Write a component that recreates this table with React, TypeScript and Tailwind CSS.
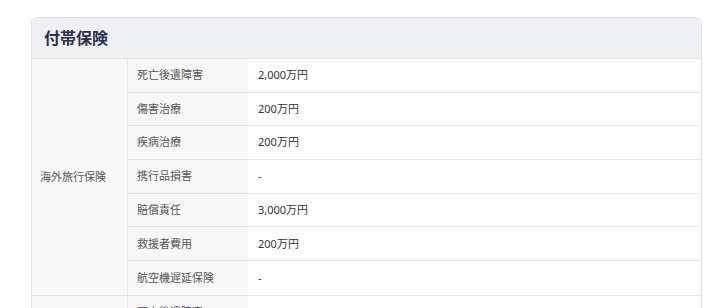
import React from "react";

interface Coverage {
  label: string;
  value: string;
}

interface Section {
  category: string;
  items: Coverage[];
}

const sections: Section[] = [
  {
    category: "海外旅行保険",
    items: [
      { label: "死亡後遺障害", value: "2,000万円" },
      { label: "傷害治療", value: "200万円" },
      { label: "疾病治療", value: "200万円" },
      { label: "携行品損害", value: "-" },
      { label: "賠償責任", value: "3,000万円" },
      { label: "救援者費用", value: "200万円" },
      { label: "航空機遅延保険", value: "-" },
    ],
  },
  {
    category: "国内旅行保険",
    items: [
      { label: "死亡後遺障害", value: "-" },
      { label: "入院", value: "-" },
    ],
  },
];

const SectionRows: React.FC<{ section: Section }> = ({ section }) => (
  <div className="flex border-b border-[#e6e6e6]">
    {/* Category */}
    <div className="w-[96px] shrink-0 flex items-center pl-[8px] bg-[#f8f8f8] border-r border-[#e6e6e6] text-[11px] text-[#555]">
      {section.category}
    </div>

    {/* Items */}
    <div className="flex-1">
      {section.items.map((item, i) => (
        <div
          key={i}
          className={`flex h-[33.7px] ${
            i < section.items.length - 1 ? "border-b border-[#e6e6e6]" : ""
          }`}
        >
          <div className="w-[120px] shrink-0 flex items-center pl-[9px] bg-[#f7f7f7] text-[11px] text-[#555]">
            {item.label}
          </div>
          <div className="flex-1 flex items-center pl-[10px] bg-white text-[11px] text-[#333]">
            {item.value}
          </div>
        </div>
      ))}
    </div>
  </div>
);

export default function App() {
  return (
    <div
      className="min-h-[308px] bg-white pt-[17px] pl-[31px]"
      style={{ fontFamily: '"Noto Sans", "Noto Sans CJK JP", sans-serif' }}
    >
      <div className="w-[671px] rounded-[6px] border border-[#e2e2e2] overflow-hidden">
        {/* Header */}
        <div className="h-[41px] flex items-center px-[12px] bg-[#eef0f4] border-b border-[#e2e2e2]">
          <h2 className="text-[16px] font-bold text-[#2b2f4e] leading-none">付帯保険</h2>
        </div>

        {sections.map((s, i) => (
          <SectionRows key={i} section={s} />
        ))}
      </div>
    </div>
  );
}
